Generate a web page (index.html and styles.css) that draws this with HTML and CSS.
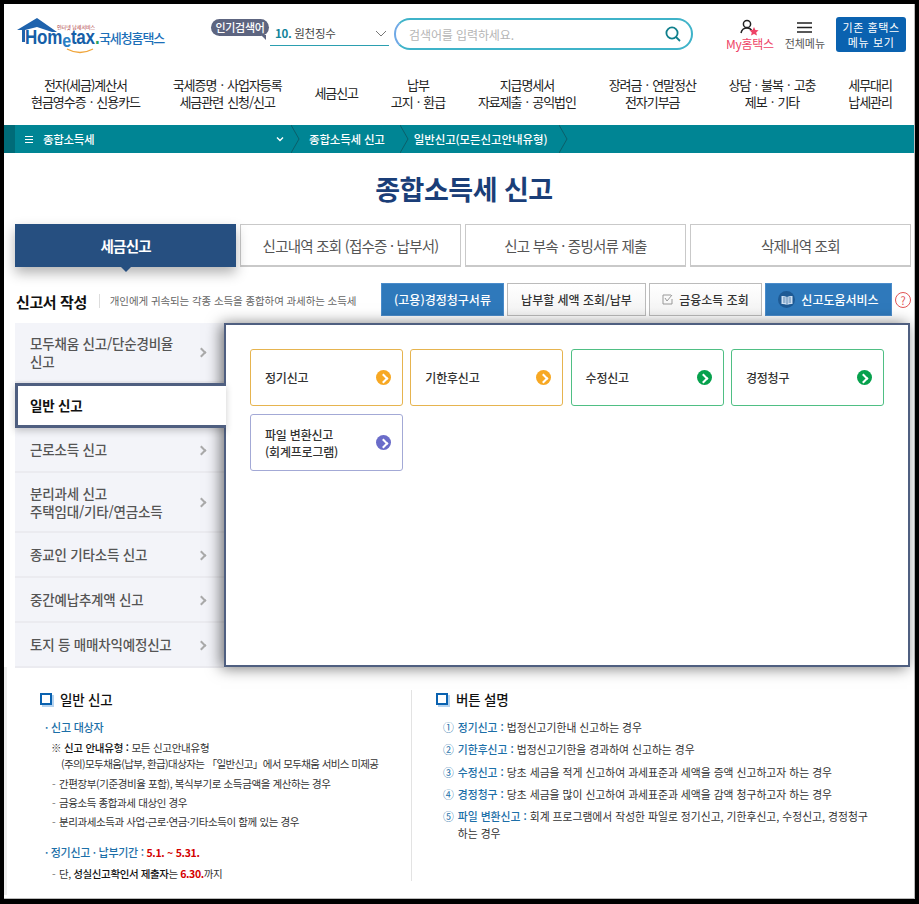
FILE: index.html
```html
<!DOCTYPE html>
<html lang="ko">
<head>
  <meta charset="UTF-8" />
  <title>종합소득세 신고</title>
  <link rel="stylesheet" href="styles.css">
</head>
<body>
<div class="frame">
  <header class="top">
    <a class="logo">
      <svg class="logo-house" width="42" height="24" viewBox="0 0 42 24">
        <path d="M1 12 L21 0 L41 14 L36 14 L21 9 L9 12 V24 H6 V12 Z" fill="#1f63ad"/>
      </svg>
      <span class="logo-mini">인터넷 납세서비스</span>
      <span class="logo-word">Hom<em>e</em>tax<i>.</i></span>
      <svg class="logo-smile" width="28" height="6" viewBox="0 0 28 6"><path d="M1 1 Q14 8 27 1" fill="none" stroke="#f0a53a" stroke-width="1.4"/></svg>
      <span class="logo-name">국세청홈택스</span>
    </a>
    <div class="popular">
      <span class="popular-badge">인기검색어</span>
      <div class="popular-select"><span><b>10.</b> 원천징수</span>
        <svg width="12" height="7" viewBox="0 0 12 7"><path d="M1 1 L6 6 L11 1" fill="none" stroke="#777" stroke-width="1"/></svg>
      </div>
    </div>
    <div class="search">
      <span class="search-hint">검색어를 입력하세요.</span>
      <svg width="16" height="16" viewBox="0 0 16 16"><circle cx="7" cy="7" r="5.6" fill="none" stroke="#0f7f8c" stroke-width="1.8"/><path d="M11 11 L15 15" stroke="#0f7f8c" stroke-width="1.8"/></svg>
    </div>
    <a class="util util-my">
      <svg width="20" height="17" viewBox="0 0 20 17"><circle cx="7" cy="5" r="3.6" fill="none" stroke="#222" stroke-width="1.5"/><path d="M1 14 Q2 9 7 9 Q10 9 11.5 11" fill="none" stroke="#222" stroke-width="1.5"/><path d="M14 8 L15.4 11 L18.6 11.3 L16.2 13.4 L17 16.6 L14 15 L11 16.6 L11.8 13.4 L9.4 11.3 L12.6 11 Z" fill="#ee4266"/></svg>
      <span>My홈택스</span>
    </a>
    <a class="util util-all">
      <svg width="15" height="12" viewBox="0 0 15 12"><path d="M0 1.5 H15 M0 6 H15 M0 10.5 H15" stroke="#222" stroke-width="1.5"/></svg>
      <span>전체메뉴</span>
    </a>
    <a class="old-menu">기존 홈택스<br>메뉴 보기</a>
  </header>

  <nav class="gnb">
    <a>전자(세금)계산서<br>현금영수증 · 신용카드</a>
    <a>국세증명 · 사업자등록<br>세금관련 신청/신고</a>
    <a>세금신고</a>
    <a>납부<br>고지 · 환급</a>
    <a>지급명세서<br>자료제출 · 공익법인</a>
    <a>장려금 · 연말정산<br>전자기부금</a>
    <a>상담 · 불복 · 고충<br>제보 · 기타</a>
    <a>세무대리<br>납세관리</a>
  </nav>

  <div class="crumbs">
    <div class="crumb-first">
      <svg width="8" height="7" viewBox="0 0 8 7"><path d="M0 .5 H8 M0 3.5 H8 M0 6.5 H8" stroke="#fff"/></svg>
      <span>종합소득세</span>
      <svg class="crumb-caret" width="8" height="5" viewBox="0 0 8 5"><path d="M1 .5 L4 3.5 L7 .5" fill="none" stroke="#fff" stroke-width="1.4"/></svg>
    </div>
    <svg class="crumb-sep" width="9" height="28" viewBox="0 0 9 28"><path d="M0 0 L8 14 L0 28" fill="none" stroke="#0b5f6a"/></svg>
    <span class="crumb crumb-a">종합소득세 신고</span>
    <svg class="crumb-sep" width="9" height="28" viewBox="0 0 9 28"><path d="M0 0 L8 14 L0 28" fill="none" stroke="#0b5f6a"/></svg>
    <span class="crumb crumb-b">일반신고(모든신고안내유형)</span>
    <svg class="crumb-sep" width="9" height="28" viewBox="0 0 9 28"><path d="M0 0 L8 14 L0 28" fill="none" stroke="#0b5f6a"/></svg>
  </div>

  <h1 class="page-title">종합소득세 신고</h1>

  <div class="tabs">
    <a class="tab tab-on">세금신고</a>
    <a class="tab">신고내역 조회 (접수증 · 납부서)</a>
    <a class="tab">신고 부속 · 증빙서류 제출</a>
    <a class="tab">삭제내역 조회</a>
  </div>

  <div class="form-head">
    <h2>신고서 작성</h2>
    <p>개인에게 귀속되는 각종 소득을 종합하여 과세하는 소득세</p>
    <div class="form-btns">
      <a class="btn btn-blue btn-a">(고용)경정청구서류</a>
      <a class="btn btn-b">납부할 세액 조회/납부</a>
      <a class="btn btn-c">
        <svg width="11" height="11" viewBox="0 0 11 11"><path d="M9 1 H1 V10 H10 V5" fill="none" stroke="#999"/><path d="M3 4 L5 7 L10 1" fill="none" stroke="#999"/></svg>
        금융소득 조회</a>
      <a class="btn btn-blue btn-d">
        <span class="book"><svg width="12" height="10" viewBox="0 0 12 10"><path d="M6 2 Q3 .5 .5 1 V9 Q3 8.5 6 10 Q9 8.5 11.5 9 V1 Q9 .5 6 2 Z" fill="#cfe0f2"/><path d="M6 2 V10 M2 3 H4.5 M2 5 H4.5 M2 7 H4.5 M7.5 3 H10 M7.5 5 H10 M7.5 7 H10" stroke="#1e5a94" stroke-width=".7"/></svg></span>
        신고도움서비스</a>
      <span class="help">?</span>
    </div>
  </div>

  <div class="work">
    <ul class="side">
      <li class="side-h60">모두채움 신고/단순경비율<br>신고</li>
      <li class="side-on">일반 신고</li>
      <li>근로소득 신고</li>
      <li class="side-h60">분리과세 신고<br>주택임대/기타/연금소득</li>
      <li>종교인 기타소득 신고</li>
      <li>중간예납추계액 신고</li>
      <li>토지 등 매매차익예정신고</li>
    </ul>
    <div class="panel">
      <a class="card card-y">정기신고<span class="go"></span></a>
      <a class="card card-y">기한후신고<span class="go"></span></a>
      <a class="card card-g">수정신고<span class="go"></span></a>
      <a class="card card-g">경정청구<span class="go"></span></a>
      <a class="card card-p">파일 변환신고<br>(회계프로그램)<span class="go"></span></a>
    </div>
  </div>

  <div class="guide">
    <section class="guide-left">
      <h3><i class="sq"></i>일반 신고</h3>
      <p class="g-blue">· 신고 대상자</p>
      <p class="g-note">※ <b>신고 안내유형 :</b> 모든 신고안내유형<br><span>(주의)모두채움(납부, 환급)대상자는 「일반신고」에서 모두채움 서비스 미제공</span></p>
      <p class="g-dash g-first"><span class="dash">-</span>간편장부(기준경비율 포함), 복식부기로 소득금액을 계산하는 경우</p>
      <p class="g-dash"><span class="dash">-</span>금융소득 종합과세 대상인 경우</p>
      <p class="g-dash"><span class="dash">-</span>분리과세소득과 사업·근로·연금·기타소득이 함께 있는 경우</p>
      <p class="g-blue g-period">· 정기신고 · 납부기간 : <strong>5.1. ~ 5.31.</strong></p>
      <p class="g-dash"><span class="dash">-</span>단, <b>성실신고확인서 제출자</b>는 <strong>6.30.</strong>까지</p>
    </section>
    <section class="guide-right">
      <h3><i class="sq"></i>버튼 설명</h3>
      <ol class="g-list">
        <li><span class="num">①</span><div><b>정기신고 :</b> 법정신고기한내 신고하는 경우</div></li>
        <li><span class="num">②</span><div><b>기한후신고 :</b> 법정신고기한을 경과하여 신고하는 경우</div></li>
        <li><span class="num">③</span><div><b>수정신고 :</b> 당초 세금을 적게 신고하여 과세표준과 세액을 증액 신고하고자 하는 경우</div></li>
        <li><span class="num">④</span><div><b>경정청구 :</b> 당초 세금을 많이 신고하여 과세표준과 세액을 감액 청구하고자 하는 경우</div></li>
        <li><span class="num">⑤</span><div><b>파일 변환신고 :</b> 회계 프로그램에서 작성한 파일로 정기신고, 기한후신고, 수정신고, 경정청구<br>하는 경우</div></li>
      </ol>
    </section>
  </div>
</div>
</body>
</html>
```

FILE: styles.css
```css
* {
  box-sizing: border-box;
}

html, body {
  margin: 0;
  height: 904px;
  overflow: hidden;
  background: #000;
}

body {
  padding: 4px 4px 5px 4px;
  font-family: "Noto Sans CJK KR", "Noto Sans", sans-serif;
  color: #333;
  font-size: 13px;
}

h1, h2, h3, p, ul, ol {
  margin: 0;
  padding: 0;
  list-style: none;
}

.frame {
  height: 895px;
  background: #fff;
  border-right: 1px solid #bbb;
  border-bottom: 1px solid #bbb;
}

/* top */
.top {
  height: 64px;
  display: flex;
  align-items: flex-start;
  padding-left: 12px;
}

.logo {
  position: relative;
  width: 195px;
  height: 64px;
  flex: none;
}

.logo-house {
  position: absolute;
  left: 0;
  top: 14px;
}

.logo-mini {
  position: absolute;
  left: 41px;
  top: 20px;
  font-size: 5px;
  line-height: 6px;
  color: #a33;
  white-space: nowrap;
}

.logo-word {
  position: absolute;
  left: 9px;
  top: 26px;
  font-family: "Liberation Sans", sans-serif;
  font-weight: bold;
  font-size: 17px;
  line-height: 17px;
  letter-spacing: -.2px;
  color: #165fa8;
  transform: scaleY(1.15);
  transform-origin: left bottom;
}

.logo-word em {
  font-style: normal;
  font-size: 16px;
  position: relative;
  top: 3px;
  color: #2a7fc4;
}

.logo-word i {
  font-style: normal;
  color: #2ca05a;
}

.logo-smile {
  position: absolute;
  left: 50px;
  top: 44px;
}

.logo-name {
  position: absolute;
  left: 83px;
  top: 25px;
  font-size: 13px;
  line-height: 18px;
  font-weight: 500;
  letter-spacing: -1.1px;
  color: #1c6fb8;
}

.popular {
  width: 178px;
  flex: none;
  display: flex;
  padding-top: 15px;
}

.popular-badge {
  position: relative;
  width: 58px;
  height: 17px;
  flex: none;
  background: #5d6580;
  color: #fff;
  border-radius: 9px;
  font-size: 11px;
  line-height: 17px;
  text-align: center;
  font-weight: 500;
  letter-spacing: -.3px;
}

.popular-badge::after {
  content: "";
  position: absolute;
  right: 3px;
  bottom: -4px;
  border-top: 5px solid #5d6580;
  border-left: 5px solid transparent;
}

.popular-select {
  width: 119px;
  height: 27px;
  margin-left: 1px;
  padding: 2px 2px 0 5px;
  border-bottom: 1px solid #2b9fb0;
  display: flex;
  justify-content: space-between;
  align-items: center;
  font-size: 11.5px;
  letter-spacing: -.3px;
  color: #444;
}

.popular-select b {
  color: #12849a;
}

.search {
  width: 299px;
  height: 32px;
  flex: none;
  margin-top: 14px;
  margin-left: 5px;
  padding: 0 10px 0 13px;
  border: 2px solid #3fb3c9;
  border-left-color: #6fa9e6;
  border-radius: 16px;
  display: flex;
  justify-content: space-between;
  align-items: center;
}

.search-hint {
  color: #b5b5b5;
  font-size: 12px;
  letter-spacing: -.1px;
}

.util {
  flex: none;
  margin-top: 15px;
  margin-left: 13px;
  display: flex;
  flex-direction: column;
  align-items: center;
  font-size: 11px;
  line-height: 15px;
  color: #555;
}

.util svg {
  height: 17px;
  display: block;
}

.util-my {
  margin-left: 33px;
  margin-right: -2px;
  color: #ee4266;
  font-size: 12px;
  letter-spacing: -.3px;
}

.old-menu {
  width: 70px;
  height: 35px;
  flex: none;
  margin-top: 13px;
  margin-left: 11px;
  background: #0a62b0;
  border-radius: 3px;
  color: #fff;
  font-size: 11px;
  line-height: 15px;
  padding-top: 3px;
  text-align: center;
  letter-spacing: .6px;
}

/* gnb */
.gnb {
  height: 57px;
  padding: 0 22px 8px 27px;
  display: flex;
  justify-content: space-between;
  align-items: center;
  text-align: center;
  font-size: 13px;
  line-height: 17px;
  letter-spacing: -1.05px;
  word-spacing: 1.5px;
  color: #222;
}

/* crumbs */
.crumbs {
  height: 28px;
  background: #008594;
  border-left: 11px solid #006b78;
  display: flex;
  align-items: center;
  color: #fff;
  font-size: 11.5px;
  font-weight: 500;
}

.crumb-first {
  width: 276px;
  padding: 0 7px 0 10px;
  display: flex;
  align-items: center;
  gap: 10px;
  letter-spacing: -.3px;
}

.crumb-caret {
  margin-left: auto;
}

.crumb-sep {
  flex: none;
}

.crumb {
  letter-spacing: -.2px;
}

.crumb-a {
  padding: 0 15px 0 9px;
}

.crumb-b {
  padding: 0 12px 0 5px;
  letter-spacing: -.1px;
}

/* title */
.page-title {
  height: 71px;
  padding: 13px 0 0 10px;
  text-align: center;
  font-size: 27px;
  line-height: 45px;
  font-weight: 700;
  letter-spacing: -.5px;
  color: #1a3e78;
}

/* tabs */
.tabs {
  height: 43px;
  margin: 0 3px 0 11px;
  display: flex;
  gap: 3.5px;
}

.tab {
  flex: 1;
  border: 1px solid #c9c9c9;
  border-bottom-width: 2px;
  display: flex;
  align-items: center;
  justify-content: center;
  font-size: 14.5px;
  letter-spacing: -.75px;
  color: #555;
}

.tab-on {
  position: relative;
  border-color: #264f80;
  background: #264f80;
  color: #fff;
  font-weight: 700;
  box-shadow: 0 6px 12px rgba(0, 0, 0, .3);
}

.tab-on::after {
  content: "";
  position: absolute;
  left: 50%;
  bottom: -7px;
  margin-left: -6px;
  border-top: 6px solid #264f80;
  border-left: 6px solid transparent;
  border-right: 6px solid transparent;
}

/* form head */
.form-head {
  height: 56px;
  margin: 0 3px 0 12px;
  padding-top: 16px;
  display: flex;
  align-items: flex-start;
}

.form-head h2 {
  margin-top: 8px;
  font-size: 15px;
  line-height: 22px;
  font-weight: 700;
  letter-spacing: -.4px;
  color: #111;
  padding-right: 12px;
}

.form-head p {
  margin-top: 11px;
  padding-left: 10px;
  border-left: 1px solid #ddd;
  font-size: 10.5px;
  line-height: 14px;
  color: #666;
  letter-spacing: -.1px;
}

.form-btns {
  margin-left: auto;
  display: flex;
  gap: 3px;
  align-items: center;
}

.btn {
  height: 33px;
  display: flex;
  align-items: center;
  justify-content: center;
  gap: 6px;
  font-size: 12px;
  font-weight: 500;
  color: #333;
  border: 1px solid #bbb;
  background: linear-gradient(#fff, #f3f3f3);
}

.btn-blue {
  border: 1px solid #4a8ccb;
  background: #2f79bb;
  color: #fff;
}

.btn-a { width: 123px; }
.btn-b { width: 139px; }
.btn-c { width: 113px; }
.btn-d { width: 127px; }

.book {
  width: 17px;
  height: 17px;
  border-radius: 50%;
  background: #1e5a94;
  display: flex;
  align-items: center;
  justify-content: center;
}

.help {
  width: 16px;
  height: 16px;
  border: 1px solid #e25555;
  border-radius: 50%;
  color: #e25555;
  font-size: 11px;
  line-height: 14px;
  text-align: center;
}

/* work area */
.work {
  margin: 0 4px 0 11px;
  height: 344px;
  display: flex;
}

.side {
  width: 209px;
  flex: none;
  background: #f3f4f9;
  color: #555;
  font-size: 13.5px;
  font-weight: 500;
  line-height: 18px;
  letter-spacing: -.2px;
}

.side li {
  height: 45px;
  padding: 0 60px 2px 15px;
  display: flex;
  align-items: center;
  position: relative;
  border-bottom: 2px solid #ebebf0;
  white-space: nowrap;
}

.side li::after {
  content: "";
  position: absolute;
  right: 19px;
  top: 50%;
  width: 5px;
  height: 5px;
  margin-top: -3px;
  border-top: 2px solid #aaa;
  border-right: 2px solid #aaa;
  transform: rotate(45deg);
}

.side .side-h60 {
  height: 60px;
  padding-bottom: 0;
}

.side .side-on {
  height: 45px;
  z-index: 2;
  margin-right: -2px;
  background: #fff;
  color: #111;
  font-weight: 700;
  border: 3px solid #4f5f80;
  border-right: 0;
  padding-left: 12px;
  box-shadow: 0 3px 7px rgba(0, 0, 0, .2);
}

.side .side-on::after {
  display: none;
}

.panel {
  flex: 1;
  position: relative;
  z-index: 1;
  background: #fff;
  border: 2px solid #4f5f80;
  box-shadow: -3px 1px 14px rgba(0, 0, 0, .55);
  padding: 24px 24px;
  display: grid;
  grid-template-columns: repeat(4, 153px);
  grid-auto-rows: 57px;
  gap: 8px 7.3px;
  align-content: start;
}

.card {
  position: relative;
  border: 1px solid #ccc;
  border-radius: 3px;
  padding: 0 36px 0 14px;
  display: flex;
  flex-direction: column;
  justify-content: center;
  font-size: 12px;
  line-height: 17px;
  font-weight: 500;
  color: #333;
  letter-spacing: -.2px;
}

.go {
  position: absolute;
  right: 11px;
  top: 50%;
  width: 15px;
  height: 15px;
  margin-top: -8px;
  border-radius: 50%;
}

.go::after {
  content: "";
  position: absolute;
  left: 3.5px;
  top: 5px;
  width: 5px;
  height: 5px;
  border-top: 2px solid #fff;
  border-right: 2px solid #fff;
  transform: rotate(45deg);
}

.card.card-y { border-color: #e6b44f; }
.card-y .go { background: #f7a823; }
.card.card-g { border-color: #4fbf84; }
.card-g .go { background: #07a14d; }
.card.card-p { border-color: #a3a9d6; }
.card-p .go { background: #6a6cc9; }

/* guide */
.guide {
  height: 228px;
  border-left: 3px solid #eee;
  padding-top: 23px;
  display: flex;
  font-size: 10.5px;
  color: #333;
}

.guide h3 {
  display: flex;
  align-items: center;
  gap: 8px;
  height: 18px;
  font-size: 13.5px;
  font-weight: 500;
  color: #111;
  letter-spacing: -.2px;
}

.sq {
  width: 12px;
  height: 12px;
  border: 2px solid #0a62b0;
  box-shadow: 2px 2px 0 #b5d3ef;
}

.guide-left {
  width: 405px;
  height: 191px;
  flex: none;
  padding-left: 33px;
  border-right: 1px solid #e3e3e3;
  letter-spacing: -.4px;
}

.guide-left p {
  white-space: nowrap;
  line-height: 16px;
}

.g-blue {
  margin-top: 11px;
  font-size: 11px;
  font-weight: 500;
  color: #1c6fa8;
  padding-left: 5px;
  letter-spacing: -.2px;
}

.g-blue strong, .g-dash strong {
  color: #d40000;
  font-weight: 700;
  font-size: 10.5px;
}

.g-note {
  margin-top: 5px;
  padding-left: 11px;
  letter-spacing: -.25px;
}

.g-note b, .g-dash b {
  font-weight: 500;
  color: #111;
}

.g-note span {
  padding-left: 10px;
  letter-spacing: -.6px;
}

.guide-left .g-dash {
  margin-top: 3px;
  padding-left: 12px;
}

.dash {
  display: inline-block;
  width: 7px;
  color: #777;
}

.guide-left .g-first {
  margin-top: 4px;
}

.guide-left .g-period {
  margin-top: 14px;
  margin-bottom: 5px;
  letter-spacing: -.3px;
}

.guide-right {
  flex: 1;
  padding-left: 24px;
}

.g-list {
  margin-top: 11px;
  padding-left: 7px;
  font-size: 10.8px;
  line-height: 17px;
}

.g-list li {
  display: flex;
  gap: 4px;
  margin-bottom: 5.3px;
}

.g-list b {
  font-weight: 500;
  color: #1c6fa8;
}

.num {
  color: #1c6fa8;
  flex: none;
}
```
